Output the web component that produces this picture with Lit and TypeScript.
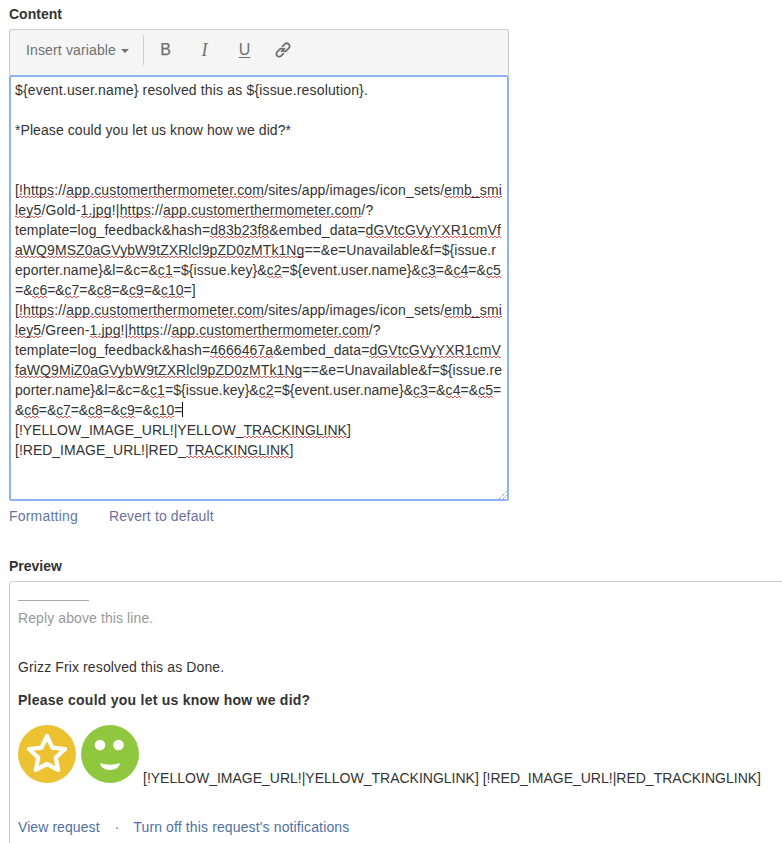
import { LitElement, html, css } from "lit";
import { customElement } from "lit/decorators.js";

const url = "~https~://~app.customerthermometer.com~/sites/app/images/icon_sets/~emb_smi~";
// [text with ~misspelled~ runs, letter-spacing of the line in px]
const LINES: [string, number][] = [
  ["${event.user.name} resolved this as ${issue.resolution}.", 0.16],
  ["", 0],
  ["*Please could you let us know how we did?*", 0.07],
  ["", 0],
  ["", 0],
  ["[~!~" + url, 0.15],
  ["~ley5~/Gold-~1.jpg~!|~https~://~app.customerthermometer.com~/?", 0.17],
  ["template=log_feedback&hash=~d83b23f8~&embed_data=~dGVtcGVyYXR1cmVf~", 0.08],
  ["~aWQ9MSZ0aGVybW9tZXRlcl9pZD0zMTk1Ng~==&e=Unavailable&f=${issue.r", 0.06],
  ["eporter.name}&l=&c=&~c1~=${issue.key}&~c2~=${event.user.name}&~c3~=&~c4~=&~c5~", 0.06],
  ["=&~c6~=&~c7~=&~c8~=&~c9~=&~c10~=]", -0.04],
  ["[~!~" + url, 0.15],
  ["~ley5~/Green-~1.jpg~!|~https~://~app.customerthermometer.com~/?", 0.13],
  ["template=log_feedback&hash=~4666467a~&embed_data=~dGVtcGVyYXR1cmV~", 0.08],
  ["~faWQ9MiZ0aGVybW9tZXRlcl9pZD0zMTk1Ng~==&e=Unavailable&f=${issue.re", 0.07],
  ["porter.name}&l=&c=&~c1~=${issue.key}&~c2~=${event.user.name}&~c3~=&~c4~=&~c5~=", 0.06],
  ["&~c6~=&~c7~=&~c8~=&~c9~=&~c10~=", -0.1],
  ["[!YELLOW_IMAGE_URL!|YELLOW_~TRACKINGLINK~]", 0],
  ["[!RED_IMAGE_URL!|RED_~TRACKINGLINK~]", 0],
];

@customElement("app-root")
export class AppRoot extends LitElement {
  static styles = css`
    :host {
      display: block;
      width: 782px;
      height: 843px;
      overflow: hidden;
      background: #fff;
      font-family: "Liberation Sans", Arial, sans-serif;
      font-size: 14px;
      line-height: 20px;
      color: #333;
    }
    .page { padding: 4px 0 0 9px; }
    .label { font-weight: 700; height: 20px; color: #333; }
    .editor { width: 500px; margin-top: 5px; }
    .toolbar {
      box-sizing: border-box;
      height: 46px;
      display: flex;
      align-items: center;
      background: #f5f5f5;
      border: 1px solid #ccc;
      border-bottom: none;
      border-radius: 3px 3px 0 0;
      padding: 0 0 5px 16px;
      color: #707070;
    }
    .insert { display: flex; align-items: center; width: 117px; letter-spacing: 0.14px; }
    .caret {
      width: 0; height: 0; margin-left: 5px; margin-top: 1px;
      border-left: 4px solid transparent;
      border-right: 4px solid transparent;
      border-top: 4px solid #707070;
    }
    .divider { width: 1px; height: 30px; background: #ccc; margin-right: 2px; }
    .tool { box-sizing: border-box; width: 39px; display: flex; justify-content: center; align-items: center; height: 30px; font-size: 16px; }
    .tool.b { -webkit-text-stroke: 0.25px #707070; }
    .tool.i { font-family: "Liberation Serif", serif; font-style: italic; font-size: 18px; }
    .tool.u { text-decoration: underline; text-underline-offset: 2px; padding-left: 2px; }
    .area {
      box-sizing: border-box;
      position: relative;
      height: 426px;
      border: 2px solid #8fb2f2;
      border-radius: 2px;
      padding: 3px 4px;
      color: #333;
    }
    .ln { white-space: pre; height: 20px; }
    .sp {
      background-image:
        linear-gradient(90deg, #e25555 50%, transparent 50%),
        linear-gradient(90deg, transparent 50%, #e25555 50%);
      background-size: 4px 1px;
      background-repeat: repeat-x;
      background-position: 0 calc(100% - 1px), 0 100%;
    }
    .cursor { display: inline-block; width: 1px; height: 15px; background: #111; vertical-align: -2px; }
    .grip { position: absolute; right: 0; bottom: 0; width: 8px; height: 8px; }
    .links { display: flex; height: 20px; margin-top: 5px; }
    .links a { color: #5f76a8; }
    .links .fmt { letter-spacing: 0.2px; margin-right: 31px; }
    .links .rev { letter-spacing: 0.12px; color: #6a6fa0; }
    .preview-label { margin-top: 30px; }
    .preview {
      box-sizing: border-box;
      width: 900px;
      height: 300px;
      margin-top: 5px;
      border: 1px solid #ccc;
      border-radius: 3px;
      padding: 7px 8px;
    }
    .rule { width: 71px; height: 1px; background: #aaa; margin-top: 11px; }
    .muted { color: #999; margin-top: 7px; height: 20px; letter-spacing: 0.1px; }
    .p1 { margin-top: 29px; height: 20px; letter-spacing: 0.12px; }
    .p2 { margin-top: 13px; height: 20px; font-weight: 700; letter-spacing: 0.25px; }
    .images { margin-top: 5px; height: 68px; white-space: pre; display: flex; align-items: flex-end; }
    .images svg { display: block; flex: none; }
    .images .g { margin-left: 5px; }
    .images span { margin-left: 4px; margin-bottom: -4px; line-height: 18px; }
    .foot { margin-top: 34px; color: #5170a5; display: flex; height: 20px; }
    .foot .view { letter-spacing: 0.08px; }
    .foot .off { letter-spacing: 0.13px; }
    .foot .dot { margin: 0 14px 0 15px; color: #777; }
  `;

  private renderLine([line, spacing]: [string, number], caret: boolean) {
    const parts = line.split("~");
    return html`<div class="ln" style="letter-spacing:${spacing}px">${parts.map((p, i) =>
      i % 2 ? html`<span class="sp">${p}</span>` : p
    )}${caret ? html`<span class="cursor"></span>` : ""}</div>`;
  }

  render() {
    return html`
      <div class="page">
        <div class="label">Content</div>
        <div class="editor">
          <div class="toolbar">
            <div class="insert">Insert variable<span class="caret"></span></div>
            <div class="divider"></div>
            <div class="tool b">B</div>
            <div class="tool i">I</div>
            <div class="tool u">U</div>
            <div class="tool">
              <svg width="16" height="16" viewBox="0 0 16 16" fill="none" stroke="#707070" stroke-width="1.8" stroke-linecap="round">
                <path d="M6.6 9.4 L9.4 6.6" />
                <path d="M7.6 4.4 L9.8 2.2 a2.8 2.8 0 0 1 4 4 L11.6 8.4 a2.8 2.8 0 0 1 -3.2 .6" />
                <path d="M8.4 11.6 L6.2 13.8 a2.8 2.8 0 0 1 -4 -4 L4.4 7.6 a2.8 2.8 0 0 1 3.2 -.6" />
              </svg>
            </div>
          </div>
          <div class="area">
            ${LINES.map((l, i) => this.renderLine(l, i === 16))}
            <svg class="grip" viewBox="0 0 8 8" stroke="#666" stroke-width="1" stroke-dasharray="1 1" fill="none">
              <path d="M0 8 L8 0" /><path d="M4 8 L8 4" />
            </svg>
          </div>
        </div>
        <div class="links"><a class="fmt">Formatting</a><a class="rev">Revert to default</a></div>
        <div class="label preview-label">Preview</div>
        <div class="preview">
          <div class="rule"></div>
          <div class="muted">Reply above this line.</div>
          <div class="p1">Grizz Frix resolved this as Done.</div>
          <div class="p2">Please could you let us know how we did?</div>
          <div class="images">
            <svg width="58" height="58" viewBox="0 0 58 58">
              <circle cx="29" cy="29" r="29" fill="#ecc232" />
              <path d="M29 11 L34.4 22.6 L47 24 L37.7 32.6 L40.2 45 L29 38.8 L17.8 45 L20.3 32.6 L11 24 L23.6 22.6 Z" fill="#ecc232" stroke="#fff" stroke-width="4.2" stroke-linejoin="round" />
            </svg>
            <svg class="g" width="58" height="58" viewBox="0 0 58 58">
              <circle cx="29" cy="29" r="29" fill="#8fc83f" />
              <circle cx="19" cy="20" r="5.3" fill="#fff" /><circle cx="37.5" cy="20" r="5.3" fill="#fff" />
              <path d="M19 38 Q29 41.5 39 38 Q38 45 29 45 Q20 45 19 38 Z" fill="#fff" />
            </svg>
            <span>[!YELLOW_IMAGE_URL!|YELLOW_TRACKINGLINK] [!RED_IMAGE_URL!|RED_TRACKINGLINK]</span>
          </div>
          <div class="foot"><span class="view">View request</span><span class="dot">·</span><span class="off">Turn off this request's notifications</span></div>
        </div>
      </div>
    `;
  }
}
